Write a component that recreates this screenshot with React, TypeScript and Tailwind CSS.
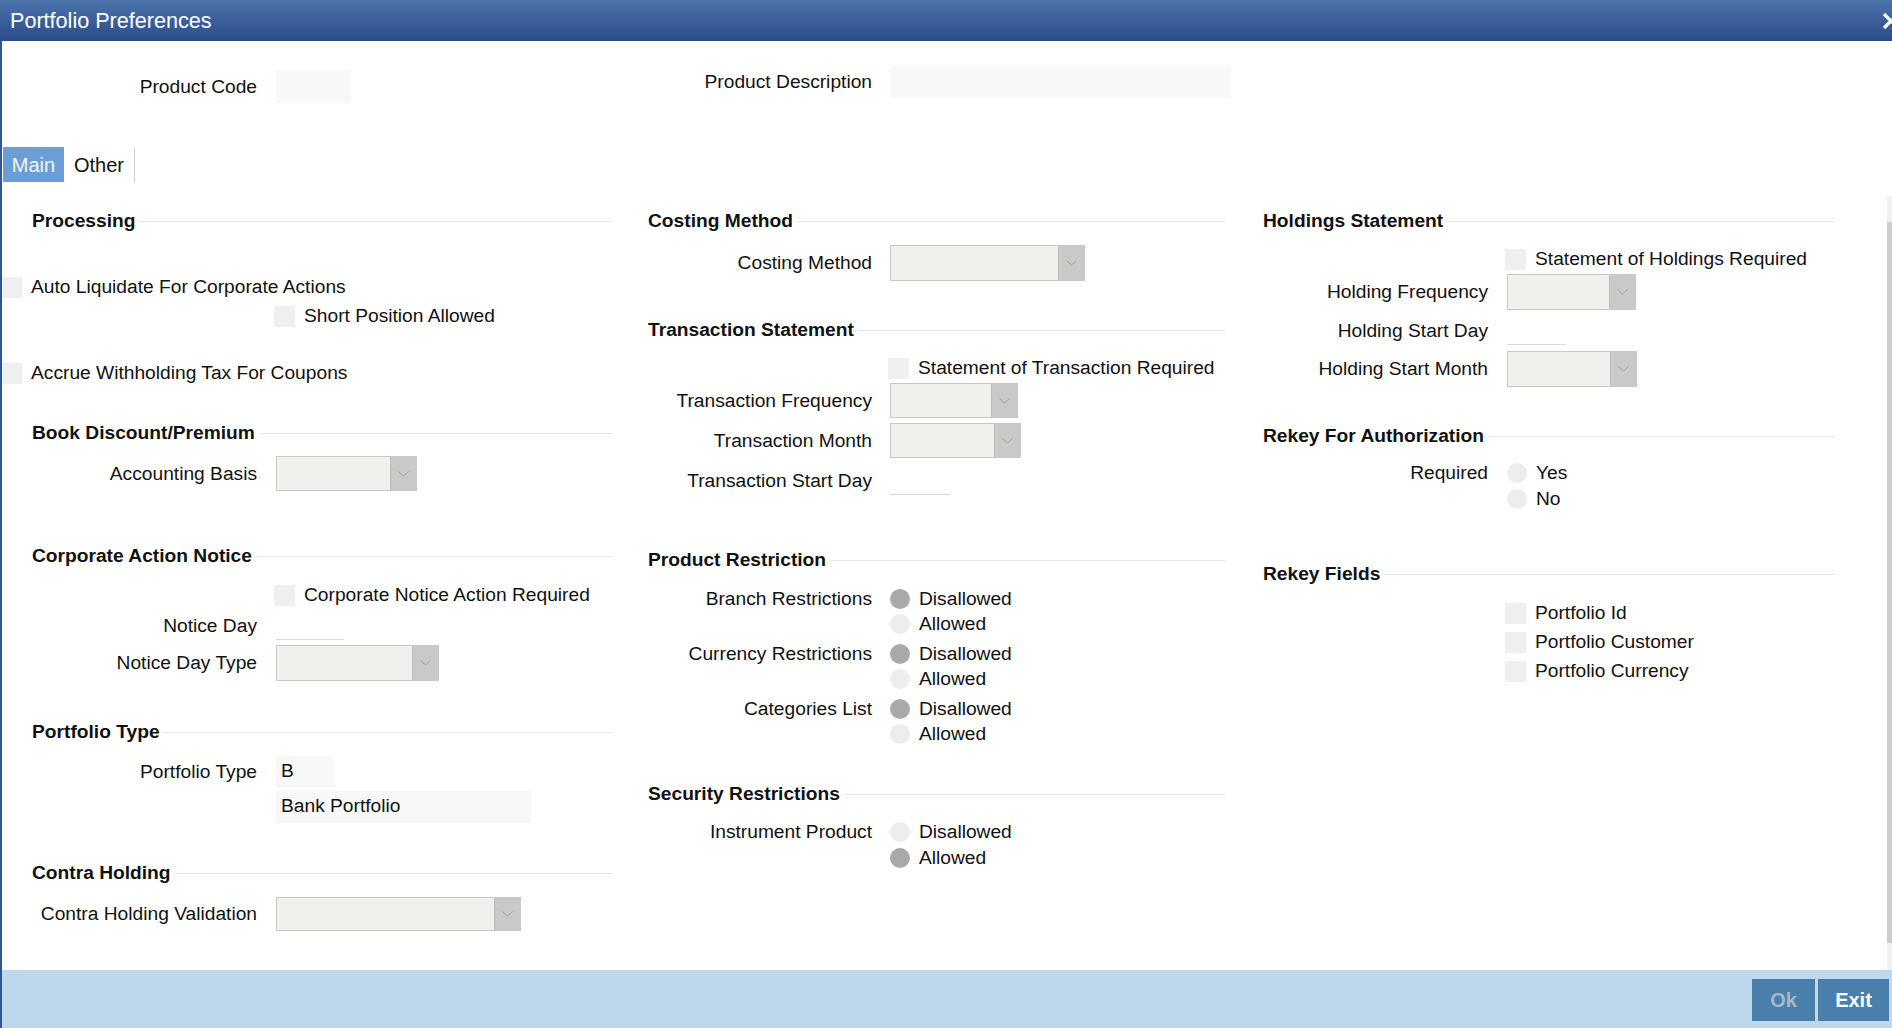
import React from 'react';

// column paddings / label widths (kept as literal classes so tailwind picks them up)
const headPad: Record<number, string> = {
  1: 'pl-[30px] pr-[8px]',
  2: 'pl-[28px] pr-[11px]',
  3: 'pl-[27px] pr-[52px]',
};
const labelW: Record<number, string> = {
  1: 'w-[255px] mr-[19px]',
  2: 'w-[252px] mr-[18px]',
  3: 'w-[252px] mr-[19px]',
};

function Heading({ col, title, className = '' }: { col: number; title: string; className?: string }) {
  return (
    <div className={`flex h-[24px] items-center ${headPad[col]} ${className}`}>
      <span className="font-bold text-[#111]">{title}</span>
      <div className="ml-1 h-px flex-1 bg-[#e6e6e6]" />
    </div>
  );
}

function Row({
  col,
  label = '',
  className = '',
  children,
}: {
  col: number;
  label?: string;
  className?: string;
  children?: React.ReactNode;
}) {
  return (
    <div className={`flex items-center ${className}`}>
      <div className={`${labelW[col]} shrink-0 text-right whitespace-nowrap`}>{label}</div>
      {children}
    </div>
  );
}

const Checkbox = ({ className = 'w-[21px] -ml-[2px]' }: { className?: string }) => (
  <div className={`h-[21px] shrink-0 bg-[#efefef] ${className}`} />
);

const Radio = ({ on = false }: { on?: boolean }) => (
  <div className={`h-[20px] w-[20px] shrink-0 rounded-full ${on ? 'bg-[#a9a9a9]' : 'bg-[#ededed]'}`} />
);

function Select({ className }: { className: string }) {
  return (
    <div className={`flex border border-[#c8c8c8] bg-[#f1f0ec] ${className}`}>
      <div className="flex-1" />
      <div className="flex w-[26px] items-center justify-center border-l border-[#bdbdbd] bg-[#c9c9c9]">
        <svg width="11" height="6" viewBox="0 0 11 6">
          <path d="M0.5 0.5 5.5 5 10.5 0.5" fill="none" stroke="#a3a3a3" strokeWidth="1" />
        </svg>
      </div>
    </div>
  );
}

const LineInput = ({ className }: { className: string }) => (
  <div className={`h-[28px] border-b border-[#d9d9d9] ${className}`} />
);

function RadioGroup({
  col,
  label,
  lineH,
  options,
  className = '',
}: {
  col: number;
  label: string;
  lineH: string;
  options: [string, boolean][];
  className?: string;
}) {
  return (
    <div className={`flex items-start ${className}`}>
      <div className={`${labelW[col]} ${lineH} flex shrink-0 items-center justify-end whitespace-nowrap`}>{label}</div>
      <div className="flex flex-col">
        {options.map(([t, on]) => (
          <div key={t} className={`flex items-center ${lineH}`}>
            <Radio on={on} />
            <span className="ml-[9px]">{t}</span>
          </div>
        ))}
      </div>
    </div>
  );
}

function CheckRow({ col, text, className = '' }: { col: number; text: string; className?: string }) {
  return (
    <Row col={col} className={`h-[22px] ${className}`}>
      <Checkbox />
      <span className="ml-[9px] whitespace-nowrap">{text}</span>
    </Row>
  );
}

export default function App() {
  return (
    <div className="h-[1028px] w-[1892px] overflow-hidden bg-white font-['Liberation_Sans',Arial,sans-serif] text-[19.2px] leading-[24px] text-[#111]">
      {/* title bar */}
      <div className="flex h-[41px] items-center overflow-hidden bg-linear-to-b from-[#4d73ab] to-[#2b4c8a] pl-[10px]">
        <span className="flex-1 text-[21.6px] text-white">Portfolio Preferences</span>
        <svg width="18" height="18" viewBox="0 0 18 18" className="-mr-[8px] shrink-0">
          <path d="M2 2 16 16 M16 2 2 16" stroke="white" strokeWidth="3.2" />
        </svg>
      </div>

      <div className="flex h-[987px] flex-col border-l-2 border-[#2f5597]">
        {/* product code / description */}
        <div className="flex h-[106px] shrink-0 items-start">
          <div className="mt-[29px] flex w-[618px] items-center">
            <div className={`${labelW[1]} text-right`}>Product Code</div>
            <div className="h-[33px] w-[75px] bg-[#f8f8f8]" />
          </div>
          <div className="mt-[25px] flex items-center">
            <div className={`${labelW[2]} text-right`}>Product Description</div>
            <div className="h-[32px] w-[341px] bg-[#f8f8f8]" />
          </div>
        </div>

        {/* tabs */}
        <div className="flex h-[35px] shrink-0 items-stretch text-[20px]">
          <div className="ml-px flex w-[61px] items-center justify-center bg-[#6c9dd6] text-[#f2f7fd]">Main</div>
          <div className="flex items-center border-r border-[#cfcfcf] px-[10px]">Other</div>
        </div>

        {/* main content */}
        <div className="flex flex-1">
          {/* column 1 */}
          <div className="flex w-[618px] shrink-0 flex-col">
            <Heading col={1} title="Processing" className="mt-[27px]" />
            <div className="mt-[43px] flex h-[22px] items-center">
              <Checkbox className="w-[20px]" />
              <span className="ml-[9px]">Auto Liquidate For Corporate Actions</span>
            </div>
            <CheckRow col={1} text="Short Position Allowed" className="mt-[7px]" />
            <div className="mt-[35px] flex h-[22px] items-center">
              <Checkbox className="w-[20px]" />
              <span className="ml-[9px]">Accrue Withholding Tax For Coupons</span>
            </div>

            <Heading col={1} title="Book Discount/Premium" className="mt-[37px]" />
            <Row col={1} label="Accounting Basis" className="mt-[11px] h-[35px]">
              <Select className="h-[35px] w-[141px]" />
            </Row>

            <Heading col={1} title="Corporate Action Notice" className="mt-[53px]" />
            <CheckRow col={1} text="Corporate Notice Action Required" className="mt-[16px]" />
            <Row col={1} label="Notice Day" className="mt-[6px] h-[28px]">
              <LineInput className="w-[68px]" />
            </Row>
            <Row col={1} label="Notice Day Type" className="mt-[5px] h-[36px]">
              <Select className="h-[36px] w-[163px]" />
            </Row>

            <Heading col={1} title="Portfolio Type" className="mt-[39px]" />
            <Row col={1} label="Portfolio Type" className="mt-[12px] h-[31px]">
              <div className="flex h-[31px] w-[59px] items-center border-b border-[#efefef] bg-[#f8f8f8] pl-[5px]">B</div>
            </Row>
            <Row col={1} className="mt-[4px] h-[31px]">
              <div className="flex h-[31px] w-[255px] items-center border-b border-[#efefef] bg-[#f8f8f8] pl-[5px]">
                Bank Portfolio
              </div>
            </Row>

            <Heading col={1} title="Contra Holding" className="mt-[39px]" />
            <Row col={1} label="Contra Holding Validation" className="mt-[12px] h-[34px]">
              <Select className="h-[34px] w-[245px]" />
            </Row>
          </div>

          {/* column 2 */}
          <div className="flex w-[616px] shrink-0 flex-col">
            <Heading col={2} title="Costing Method" className="mt-[27px]" />
            <Row col={2} label="Costing Method" className="mt-[12px] h-[36px]">
              <Select className="h-[36px] w-[195px]" />
            </Row>

            <Heading col={2} title="Transaction Statement" className="mt-[37px]" />
            <CheckRow col={2} text="Statement of Transaction Required" className="mt-[15px]" />
            <Row col={2} label="Transaction Frequency" className="mt-[4px] h-[35px]">
              <Select className="h-[35px] w-[128px]" />
            </Row>
            <Row col={2} label="Transaction Month" className="mt-[5px] h-[35px]">
              <Select className="h-[35px] w-[131px]" />
            </Row>
            <Row col={2} label="Transaction Start Day" className="mt-[9px] h-[28px]">
              <LineInput className="w-[60px]" />
            </Row>

            <Heading col={2} title="Product Restriction" className="mt-[53px]" />
            <RadioGroup
              col={2}
              label="Branch Restrictions"
              lineH="h-[25px]"
              className="mt-[14px]"
              options={[
                ['Disallowed', true],
                ['Allowed', false],
              ]}
            />
            <RadioGroup
              col={2}
              label="Currency Restrictions"
              lineH="h-[25px]"
              className="mt-[5px]"
              options={[
                ['Disallowed', true],
                ['Allowed', false],
              ]}
            />
            <RadioGroup
              col={2}
              label="Categories List"
              lineH="h-[25px]"
              className="mt-[5px]"
              options={[
                ['Disallowed', true],
                ['Allowed', false],
              ]}
            />

            <Heading col={2} title="Security Restrictions" className="mt-[36px]" />
            <RadioGroup
              col={2}
              label="Instrument Product"
              lineH="h-[26px]"
              className="mt-[13px]"
              options={[
                ['Disallowed', false],
                ['Allowed', true],
              ]}
            />
          </div>

          {/* column 3 */}
          <div className="flex w-[651px] shrink-0 flex-col">
            <Heading col={3} title="Holdings Statement" className="mt-[27px]" />
            <CheckRow col={3} text="Statement of Holdings Required" className="mt-[15px]" />
            <Row col={3} label="Holding Frequency" className="mt-[4px] h-[36px]">
              <Select className="h-[36px] w-[129px]" />
            </Row>
            <Row col={3} label="Holding Start Day" className="mt-[7px] h-[28px]">
              <LineInput className="w-[59px]" />
            </Row>
            <Row col={3} label="Holding Start Month" className="mt-[6px] h-[36px]">
              <Select className="h-[36px] w-[130px]" />
            </Row>

            <Heading col={3} title="Rekey For Authorization" className="mt-[37px]" />
            <RadioGroup
              col={3}
              label="Required"
              lineH="h-[26px]"
              className="mt-[12px]"
              options={[
                ['Yes', false],
                ['No', false],
              ]}
            />

            <Heading col={3} title="Rekey Fields" className="mt-[50px]" />
            <CheckRow col={3} text="Portfolio Id" className="mt-[16px]" />
            <CheckRow col={3} text="Portfolio Customer" className="mt-[7px]" />
            <CheckRow col={3} text="Portfolio Currency" className="mt-[7px]" />
          </div>

          {/* scrollbar */}
          <div className="flex w-[5px] shrink-0 flex-col pt-[14px]">
            <div className="h-[26px] bg-[#f1f1f1]" />
            <div className="flex-1 bg-[#cdcdcd]" />
            <div className="h-[27px] bg-[#f1f1f1]" />
          </div>
        </div>

        {/* footer */}
        <div className="flex h-[58px] shrink-0 items-start justify-end gap-[3px] bg-[#bdd8ed] pr-[3px] pt-[9px]">
          <button className="h-[42px] w-[63px] bg-[#4a7fac] text-[20px] font-bold text-[#a9b8c6]">Ok</button>
          <button className="h-[42px] w-[71px] bg-[#4a7fac] text-[20px] font-bold text-white">Exit</button>
        </div>
      </div>
    </div>
  );
}
